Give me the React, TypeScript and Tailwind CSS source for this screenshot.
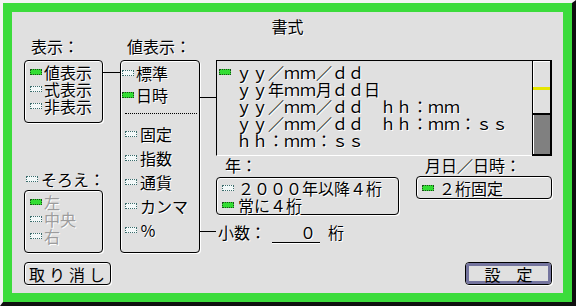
import type { ReactNode } from 'react'

function Lamp({ on }: { on?: boolean }) {
  if (on) {
    return (
      <span className="inline-block w-[12px] h-[6px] shrink-0 border border-dotted border-[#1c4a1c] bg-[#33dd33]" />
    )
  }
  return <span className="inline-block w-[12px] h-[6px] shrink-0 border border-dotted border-[#3c6c6c] bg-[#f2f8f8]" />
}

function Box({ className = '', children }: { className?: string; children: ReactNode }) {
  return (
    <div className={`rounded-[4px] border border-black shadow-[inset_1px_1px_0_#fff,1px_1px_0_#fff] ${className}`}>
      {children}
    </div>
  )
}

const FORMATS = [
  'ｙｙ／ｍｍ／ｄｄ',
  'ｙｙ年ｍｍ月ｄｄ日',
  'ｙｙ／ｍｍ／ｄｄ　ｈｈ：ｍｍ',
  'ｙｙ／ｍｍ／ｄｄ　ｈｈ：ｍｍ：ｓｓ',
  'ｈｈ：ｍｍ：ｓｓ',
]

const NUMBER_KINDS = ['固定', '指数', '通貨', 'カンマ', '％']

export default function App() {
  return (
    <div className="w-[576px] h-[306px] flex flex-col font-['Noto_Sans_CJK_JP',sans-serif] text-[16px] leading-[16px] text-black [text-shadow:1px_1px_0_#fff]">
      {/* window frame: light top-left edge, dark bottom-right edge, green band */}
      <div className="w-[576px] h-[306px] border-t-[3px] border-l-[3px] border-r-[4px] border-b-[4px] border-t-[#f4f4f4] border-l-[#f4f4f4] border-r-[#101010] border-b-[#101010]">
        <div className="w-[569px] h-[299px] border-[9px] border-[#3cdc3c] bg-[#e0e0e0] flex flex-col">
          {/* title */}
          <div className="pt-[6px] h-[22px] text-center">書式</div>

          {/* body */}
          <div className="mt-[4px] h-[215px] flex pl-[12px]">
            {/* 表示 / そろえ */}
            <div className="w-[79px] shrink-0 flex flex-col">
              <div className="pl-[7px] h-[16px]">表示：</div>
              <Box className="mt-[6px] h-[63px] pt-[2px] pl-[5px]">
                {['値表示', '式表示', '非表示'].map((t, i) => (
                  <div key={t} className="h-[17px] flex items-center gap-[2px]">
                    <Lamp on={i === 0} />
                    <span>{t}</span>
                  </div>
                ))}
              </Box>
              <div className="mt-[48px] h-[16px] w-max pl-[2px] flex items-center gap-[3px] whitespace-nowrap">
                <Lamp />
                <span>そろえ：</span>
              </div>
              <Box className="mt-[3px] h-[63px] pt-[2px] pl-[5px]">
                {['左', '中央', '右'].map((t, i) => (
                  <div key={t} className="h-[17px] flex items-center gap-[2px] text-[#9c9c9c]">
                    <Lamp on={i === 0} />
                    <span>{t}</span>
                  </div>
                ))}
              </Box>
            </div>

            <div className="w-[17px] shrink-0">
              <div className="mt-[34px] h-px bg-black" />
            </div>

            {/* 値表示 */}
            <div className="w-[80px] shrink-0 flex flex-col">
              <div className="pl-[7px] h-[16px]">値表示：</div>
              <Box className="mt-[6px] h-[193px] pt-[1px]">
                {['標準', '日時'].map((t, i) => (
                  <div key={t} className="h-[22px] pl-[1px] flex items-center gap-[2px]">
                    <Lamp on={i === 1} />
                    <span>{t}</span>
                  </div>
                ))}
                <div className="mt-[7px] ml-[4px] mr-[2px] border-t border-dotted border-black" />
                <div className="mt-[8px]">
                  {NUMBER_KINDS.map((t) => (
                    <div key={t} className="h-[24px] pl-[4px] flex items-center gap-[3px]">
                      <Lamp />
                      <span>{t}</span>
                    </div>
                  ))}
                </div>
              </Box>
            </div>

            <div className="w-[16px] shrink-0">
              <div className="mt-[59px] h-px bg-black" />
              <div className="mt-[133px] h-px bg-black" />
            </div>

            {/* format list and options */}
            <div className="w-[336px] shrink-0 flex flex-col">
              <div className="mt-[22px] h-[96px] flex">
                <div className="w-[316px] border-t border-l border-b border-t-black border-l-black border-b-white pt-[2px] pl-[2px]">
                  {FORMATS.map((f, i) => (
                    <div key={f} className="h-[17px] flex items-center gap-[5px] whitespace-nowrap">
                      {i === 0 ? <Lamp on /> : <span className="w-[12px] shrink-0" />}
                      <span>{f}</span>
                    </div>
                  ))}
                </div>
                <div className="w-[20px] border-t border-l border-r-2 border-b-2 border-black flex flex-col">
                  <div className="h-[52px] shadow-[inset_1px_1px_0_#fff] flex flex-col">
                    <div className="mt-[26px] h-[3px] bg-[#e6e600]" />
                  </div>
                  <div className="h-[2px] bg-black" />
                  <div className="flex-1 bg-[#808080] shadow-[inset_1px_0_0_#fff]" />
                </div>
              </div>

              <div className="mt-[1px] flex">
                <div className="w-[183px] flex flex-col">
                  <div className="pl-[9px] h-[16px]">年：</div>
                  <Box className="mt-[4px] h-[38px] pt-[1px] pl-[5px]">
                    {['２０００年以降４桁', '常に４桁'].map((t, i) => (
                      <div key={t} className="h-[17px] flex items-center gap-[4px] whitespace-nowrap">
                        <Lamp on={i === 1} />
                        <span>{t}</span>
                      </div>
                    ))}
                  </Box>
                </div>
                <div className="ml-[17px] w-[136px] flex flex-col">
                  <div className="pl-[9px] h-[16px]">月日／日時：</div>
                  <Box className="mt-[3px] h-[23px] pl-[5px] flex items-center gap-[5px]">
                    <Lamp on />
                    <span>２桁固定</span>
                  </Box>
                </div>
              </div>

              <div className="mt-[9px] flex items-start">
                <span className="pl-[2px]">小数：</span>
                <div className="ml-[6px] w-[48px] h-[19px] border-b border-black shadow-[0_1px_0_#fff] text-right pr-[4px]">
                  ０
                </div>
                <span className="ml-[8px]">桁</span>
              </div>
            </div>
          </div>

          {/* buttons */}
          <div className="mt-[9px] flex justify-between pl-[12px] pr-[11px]">
            <button className="w-[87px] h-[23px] rounded-[4px] border border-black shadow-[inset_1px_1px_0_#fff,1px_1px_0_#fff] pl-[4px] text-left tracking-[4px] leading-[16px]">
              取り消し
            </button>
            <button className="w-[87px] h-[23px] rounded-[4px] border border-black shadow-[1px_1px_0_#fff] p-0">
              <div className="h-full rounded-[3px] border-[3px] border-[#74749e] flex items-center justify-center leading-[16px]">
                設　定
              </div>
            </button>
          </div>
        </div>
      </div>
    </div>
  )
}
